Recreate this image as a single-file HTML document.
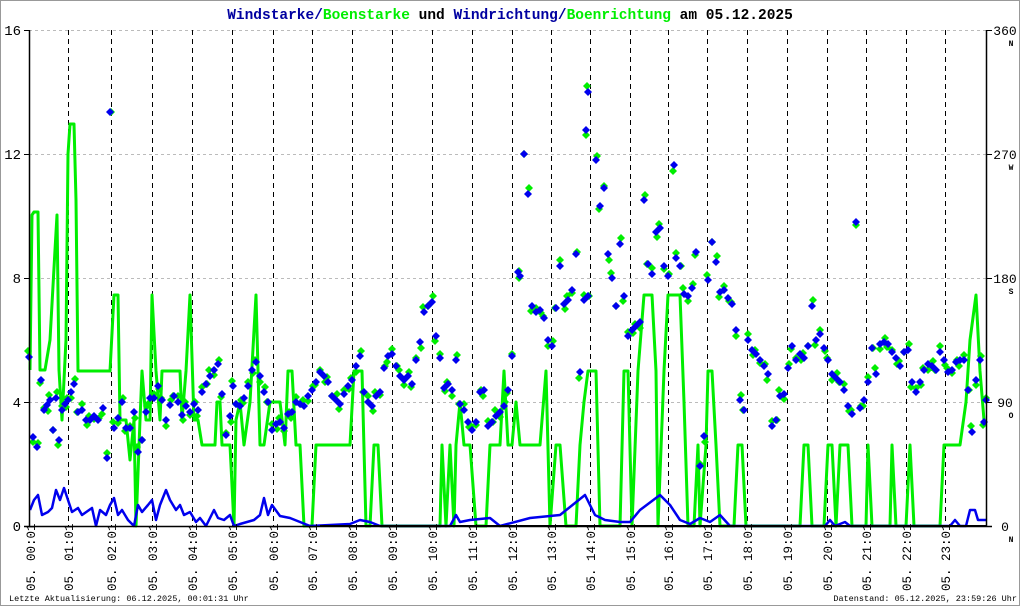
<!DOCTYPE html>
<html><head><meta charset="utf-8"><style>
html,body{margin:0;padding:0;background:#fff}
body{width:1020px;height:606px;overflow:hidden}
svg{display:block}
text{font-family:"Liberation Mono","DejaVu Sans Mono",monospace}
</style></head><body>
<svg id="s" width="1020" height="606" xmlns="http://www.w3.org/2000/svg">
<rect x="0.5" y="0.5" width="1019" height="605" fill="#fff" stroke="#999"/>
<g id="grid"></g>
<g id="lines"></g>
<g id="dots"></g>
<g id="axes"></g>
<text x="510" y="19" text-anchor="middle" font-size="14.5" font-weight="bold" fill="#000"><tspan fill="#0000a0">Windstarke/</tspan><tspan fill="#00ee00">Boenstarke</tspan> und <tspan fill="#0000a0">Windrichtung/</tspan><tspan fill="#00ee00">Boenrichtung</tspan> am 05.12.2025</text>
<text x="9" y="601" font-size="8.5" fill="#000">Letzte Aktualisierung: 06.12.2025, 00:01:31 Uhr</text>
<text x="1017" y="601" font-size="8.5" fill="#000" text-anchor="end">Datenstand: 05.12.2025, 23:59:26 Uhr</text>
</svg>
<script>
var NS="http://www.w3.org/2000/svg";
function el(p,t,a,txt){var e=document.createElementNS(NS,t);for(var k in a)e.setAttribute(k,a[k]);if(txt!=null)e.textContent=txt;document.getElementById(p).appendChild(e);return e;}
var hx=[30,68,111,152,192,232,273,312,352,392,432,472,512,551,590,630,668,707,747,787,827,866,906,945];
[30,154,278,402].forEach(function(y){el("grid","line",{x1:29,y1:y+.5,x2:986,y2:y+.5,stroke:"#bbb","stroke-dasharray":"3,3"});});
hx.slice(1).forEach(function(x){el("grid","line",{x1:x+.5,y1:30,x2:x+.5,y2:526,stroke:"#000","stroke-dasharray":"5,4"});});
var g="30,370 32,215 34,212 38,212 40,370 45,370 50,340 55,250 57,215 59,370 62,420 66,340 68,154 70,124 74,124 76,200 78,371 106,371 110,371 114,295 118,295 120,420 126,420 130,460 134,420 136,526 140,420 142,371 146,420 150,420 152,295 156,371 160,420 162,371 180,371 182,420 186,371 190,295 194,420 198,420 202,445 215,445 217,402 220,402 222,445 230,445 234,526 236,420 240,402 244,445 250,402 256,295 260,445 264,445 270,402 280,402 285,445 288,371 292,371 296,445 300,445 304,526 312,526 316,445 350,445 354,371 362,371 366,526 370,526 374,445 378,445 382,526 440,526 442,445 446,526 450,445 454,526 456,445 460,402 464,445 470,445 476,526 486,526 490,445 500,445 504,371 508,445 512,445 516,402 520,445 540,445 546,371 550,526 556,445 560,445 566,526 576,526 580,445 584,402 588,371 596,371 600,526 620,526 624,371 628,371 632,526 638,371 644,295 652,295 656,371 658,526 664,371 668,295 680,295 684,402 688,526 694,526 698,445 700,526 706,445 708,371 712,371 716,445 720,526 734,526 738,445 742,445 746,526 800,526 804,445 808,445 812,526 824,526 828,445 832,445 836,526 840,445 848,445 852,526 866,526 868,445 872,526 890,526 892,445 896,526 906,526 910,445 914,526 940,526 944,445 950,445 954,445 960,445 966,402 970,340 976,295 980,371 984,420";
el("lines","polyline",{points:g,fill:"none",stroke:"#00ee00","stroke-width":3,"stroke-linejoin":"round"});
var b="30,510 34,500 38,495 42,515 48,512 52,508 56,490 60,500 64,488 68,500 72,512 78,508 82,515 92,508 96,526 100,510 106,515 110,505 114,498 118,515 122,510 128,520 134,526 138,505 142,512 148,505 152,500 156,520 160,505 166,490 170,500 176,510 180,505 184,515 190,512 196,522 200,518 206,526 214,510 218,518 224,520 230,515 234,526 240,524 254,520 260,515 264,498 268,515 272,505 280,516 290,518 300,522 310,526 350,524 360,520 370,522 380,526 450,526 456,515 460,522 470,520 490,518 500,526 530,518 560,515 585,495 595,515 605,520 620,522 630,522 640,510 660,495 670,505 680,520 690,524 700,518 710,522 720,515 730,526 825,526 830,520 835,526 845,522 850,526 950,526 955,520 960,526 966,526 970,510 975,510 978,520 986,520";
el("lines","polyline",{points:b,fill:"none",stroke:"#0000ee","stroke-width":2.5,"stroke-linejoin":"round"});
el("lines","line",{x1:320,y1:526,x2:986,y2:526,stroke:"#000","stroke-width":2});
var d="29,357 33,437 37,447 41,380 44,410 47,405 50,400 53,430 56,398 59,440 62,410 65,404 68,400 71,392 74,384 78,412 82,410 86,420 90,420 94,416 98,420 103,408 107,458 110,112 114,428 118,418 122,402 126,428 130,428 134,412 138,452 142,440 146,412 150,398 154,398 158,386 162,400 166,420 170,405 174,396 178,402 182,415 186,406 190,412 194,404 198,410 202,392 206,384 210,376 214,370 218,364 222,394 226,435 230,416 233,386 236,404 240,406 244,398 248,386 252,370 256,362 260,376 264,392 268,402 272,430 276,424 280,422 284,428 288,414 292,412 296,402 300,404 304,406 308,396 312,390 316,382 320,372 324,376 328,382 332,396 336,400 340,404 344,394 348,386 352,380 356,366 360,356 364,392 368,402 372,406 376,396 380,392 384,368 388,356 392,354 396,366 400,376 404,380 408,376 412,384 416,360 420,342 424,312 428,306 432,302 436,336 440,358 444,388 448,384 452,390 456,360 460,404 464,410 468,422 472,430 476,422 480,392 484,390 488,426 492,422 496,416 500,412 504,406 508,390 512,356 518,272 520,276 524,154 528,194 532,306 536,312 540,310 544,318 548,340 552,346 556,308 560,266 564,304 568,300 572,290 576,254 580,372 584,300 588,296 588,92 586,130 596,160 600,206 604,188 608,254 612,278 616,306 620,244 624,296 628,336 632,330 636,326 640,322 644,200 648,264 652,274 656,232 660,228 664,266 668,276 674,165 676,258 680,266 684,294 688,296 692,288 696,252 700,466 704,436 708,280 712,242 716,262 720,292 724,290 728,298 732,304 736,330 740,400 744,410 748,340 752,350 756,354 760,360 764,366 768,374 772,426 776,420 780,396 784,394 788,368 792,346 796,360 800,354 804,358 808,346 812,306 816,340 820,334 824,348 828,360 832,374 836,378 840,382 844,390 848,406 852,414 856,222 860,408 864,400 868,382 872,348 876,374 880,344 884,342 888,344 892,352 896,358 900,366 904,352 908,350 912,382 916,392 920,382 924,370 928,364 932,366 936,370 940,352 944,360 948,372 952,370 956,362 960,360 964,360 968,390 972,432 976,380 980,360 984,422 986,400";
var pts=d.split(" ").map(function(p){return p.split(",").map(Number);});
function dia(x,y){return "M"+x+","+(y-4)+"L"+(x+4)+","+y+"L"+x+","+(y+4)+"L"+(x-4)+","+y+"Z";}
var gp="",bp="";
pts.forEach(function(p,i){var o=[-6,5,-4,3,-2,6,-5,0][i%8];gp+=dia(p[0]+(i%3-1),p[1]+o);bp+=dia(p[0],p[1]);});
el("dots","path",{d:gp,fill:"#00ee00"});
el("dots","path",{d:bp,fill:"#0000ee"});
el("axes","line",{x1:29.5,y1:30,x2:29.5,y2:527,stroke:"#000","stroke-width":1.5});
el("axes","line",{x1:986.5,y1:30,x2:986.5,y2:527,stroke:"#000","stroke-width":1.5});
el("axes","line",{x1:24,y1:526.5,x2:992,y2:526.5,stroke:"#000","stroke-width":1.5});
[[30,"16"],[154,"12"],[278,"8"],[402,"4"],[526,"0"]].forEach(function(a){el("axes","line",{x1:24,y1:a[0]+.5,x2:30,y2:a[0]+.5,stroke:"#000"});el("axes","text",{x:21,y:a[0]+5,"font-size":14,"text-anchor":"end",fill:"#000"},a[1]);});
[[30,"360","N"],[154,"270","W"],[278,"180","S"],[402,"90","O"],[526,"0","N"]].forEach(function(a){el("axes","line",{x1:986,y1:a[0]+.5,x2:992,y2:a[0]+.5,stroke:"#000"});el("axes","text",{x:1005,y:a[0]+5,"font-size":13,"text-anchor":"middle",fill:"#000"},a[1]);el("axes","text",{x:1011,y:a[0]+16,"font-size":8,"font-weight":"bold","text-anchor":"middle",fill:"#000"},a[2]);});
hx.forEach(function(x,h){var s="05. "+(h<10?"0":"")+h+":01";el("axes","text",{x:0,y:0,"font-size":12.5,fill:"#000",transform:"translate("+(x+5)+",591) rotate(-90)"},s);});
</script>
</body></html>
